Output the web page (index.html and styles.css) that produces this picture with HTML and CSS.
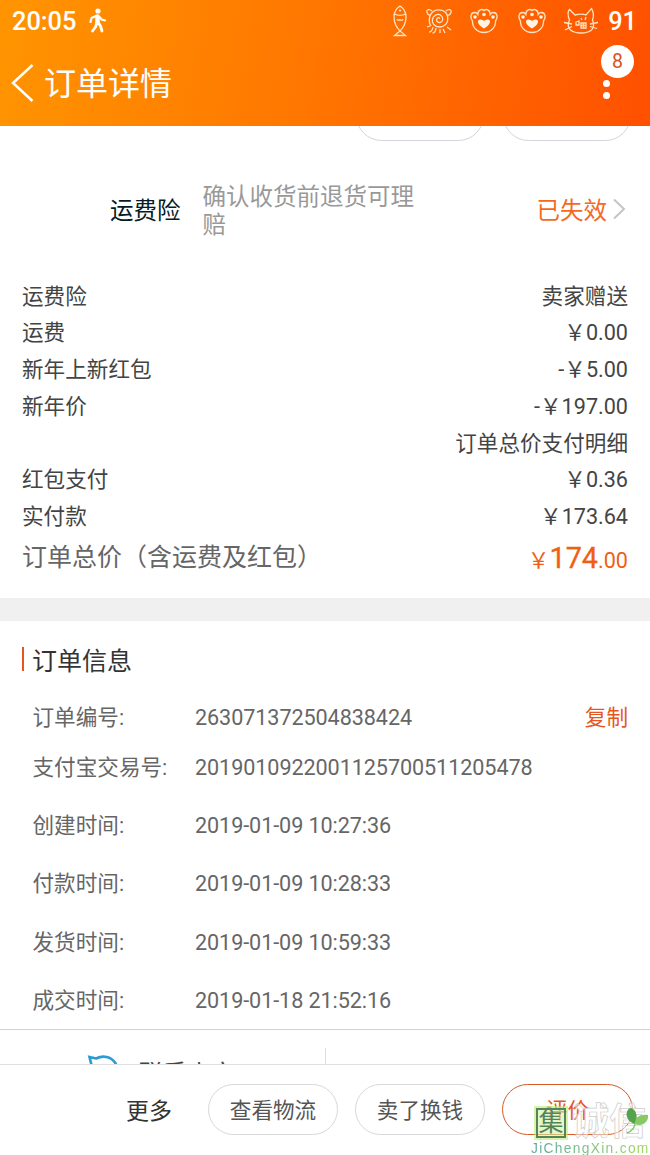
FILE: index.html
```
<!DOCTYPE html>
<html lang="zh-CN">
<head>
    <meta charset="UTF-8">
    <meta name="viewport" content="width=device-width, initial-scale=1.0">
    <title>订单详情</title>
    <link rel="stylesheet" href="styles.css">
</head>
<body>
    <header class="header">
        <div class="status-bar">
            <span class="clock">20:05</span>
            <svg class="walker" width="18" height="25" viewBox="0 0 18 25" fill="none" stroke="#fff" stroke-linecap="round" stroke-linejoin="round">
                <circle cx="9" cy="3" r="2.6" fill="#fff" stroke="none"/>
                <path d="M8.5 8.5v6" stroke-width="4.5"/>
                <path d="M7 8l-4.500 2-1 4M10.500 9l2 2.500 3.500 1" stroke-width="2.200"/>
                <path d="M8 15l-1.500 4-3 4M9.500 15l2 3 1.500 5" stroke-width="2.800"/>
            </svg>
            <div class="status-icons">
                <svg width="16" height="32" viewBox="0 0 16 32">
                    <path d="M8 1C3.500 4 2 7 2 12c0 6 2.500 10.500 6 14 3.500-3.500 6-8 6-14 0-5-1.500-8-6-11zM8 26l-5.500 4.500h11zM2.500 9c3 1.800 8 1.800 11 0M5 14c.3 1.800 2.700 1.800 3 .2.300 1.600 2.700 1.600 3-.2"/>
                    <circle class="solid" cx="8" cy="5.500" r="1"/>
                </svg>
                <svg width="28" height="28" viewBox="0 0 28 28">
                    <path d="M7 4C5 2 1 2 2 5.500c.4 1.500 1.500 2.500 3 3M21 4c2-2 6-2 5 1.500-.4 1.500-1.500 2.500-3 3"/>
                    <path d="M6 19C3 15 4 7 9 4c5-2.500 12-1 13.500 5 1.500 7-3 11-8 11-5 0-8-4-7-8s5.500-6 8.500-3.500c3 2.500 2 6.500-1 7-3 .5-4-2-3-4 1-1.500 3-1 2.500.5"/>
                    <path d="M5 19l-3 1M8 20c-.5 3-2 5-4 5M11 21c-.3 3-1.500 5-3.500 5M15 22v4M18 22l2 4M22 20l4 3"/>
                </svg>
                <svg width="28" height="26" viewBox="0 0 28 26">
                    <path d="M2.500 13C0 10 .5 4.500 4.500 4.500c1.500 0 2.500.5 3.300 1.800C8 1.500 12 .5 14 2.500c2-2 6-1 6.200 3.800C21 5 22 4.500 23.500 4.500c4 0 4.500 5.500 2 8.500.5 6-4.500 11.500-11.500 11.500S2 19 2.500 13z"/>
                    <circle class="solid" cx="5" cy="9" r="1.800"/><circle class="solid" cx="14" cy="6.500" r="1.800"/><circle class="solid" cx="23" cy="9" r="1.800"/>
                    <path class="solid" d="M14 20.500c-7-4-7.500-9-3.500-9 2 0 3.500 1.500 3.500 1.500s1.500-1.500 3.500-1.500c4 0 3.500 5-3.500 9z"/>
                </svg>
                <svg class="second-paw" width="28" height="26" viewBox="0 0 28 26">
                    <path d="M2.500 13C0 10 .5 4.500 4.500 4.500c1.500 0 2.500.5 3.300 1.800C8 1.500 12 .5 14 2.500c2-2 6-1 6.200 3.800C21 5 22 4.500 23.500 4.500c4 0 4.500 5.500 2 8.500.5 6-4.500 11.500-11.500 11.500S2 19 2.500 13z"/>
                    <circle class="solid" cx="5" cy="9" r="1.800"/><circle class="solid" cx="14" cy="6.500" r="1.800"/><circle class="solid" cx="23" cy="9" r="1.800"/>
                    <path class="solid" d="M14 20.500c-7-4-7.500-9-3.500-9 2 0 3.500 1.500 3.500 1.500s1.500-1.500 3.500-1.500c4 0 3.500 5-3.500 9z"/>
                </svg>
                <svg width="36" height="28" viewBox="0 0 36 28">
                    <path d="M6.500 13C4.500 8 5 4 6.500 2.500L12 8c4-1 8-1 11 0l5.500-6.500C30 4 31 9 29.500 13c2 5 1 8-1 10-5 4-16 4-21 0-2-2-3-6-1-10z"/>
                    <path d="M1 15.500l8 1.500M2 23l7-3.500M35 15.500l-8 1.500M34 21.500l-7-2M13 15l3-1v4h-3zM18 16h5v5h-5zM18 18.500h5M20.500 16v5M19 13l-1-2M22 13l1-3"/>
                </svg>
            </div>
            <span class="battery">91</span>
        </div>
        <div class="title-bar">
            <svg width="24" height="42" viewBox="0 0 24 42" fill="none" stroke="#fff" stroke-width="2.500"><path d="M21.500 3L2 21l19.500 18"/></svg>
            <h1>订单详情</h1>
            <div class="menu">
                <span class="dot"></span>
                <span class="dot"></span>
                <span class="badge">8</span>
            </div>
        </div>
    </header>

    <main>
        <div class="item-actions">
            <span class="item-button"></span>
            <span class="item-button"></span>
        </div>
        <section class="insurance">
            <span class="insurance-name">运费险</span>
            <p class="insurance-text">确认收货前退货可理赔</p>
            <span class="insurance-state">已失效</span>
            <svg width="14" height="22" viewBox="0 0 14 22" fill="none" stroke="#c4c4c4" stroke-width="2"><path d="M2 1.500l10 9.500L2 20.500"/></svg>
        </section>

        <section class="prices">
            <div class="price-row"><span>运费险</span><span>卖家赠送</span></div>
            <div class="price-row"><span>运费</span><span>￥0.00</span></div>
            <div class="price-row"><span>新年上新红包</span><span>-￥5.00</span></div>
            <div class="price-row"><span>新年价</span><span>-￥197.00</span></div>
            <div class="price-row"><span></span><span>订单总价支付明细</span></div>
            <div class="price-row"><span>红包支付</span><span>￥0.36</span></div>
            <div class="price-row"><span>实付款</span><span>￥173.64</span></div>
            <div class="price-row total"><span>订单总价（含运费及红包）</span><span class="total-price">￥<b>174</b>.00</span></div>
        </section>

        <section class="info">
            <h2>订单信息</h2>
            <div class="info-row first"><span class="label">订单编号:</span><span class="value">263071372504838424</span><a class="copy">复制</a></div>
            <div class="info-row"><span class="label">支付宝交易号:</span><span class="value">2019010922001125700511205478</span></div>
            <div class="info-row"><span class="label">创建时间:</span><span class="value">2019-01-09 10:27:36</span></div>
            <div class="info-row"><span class="label">付款时间:</span><span class="value">2019-01-09 10:28:33</span></div>
            <div class="info-row"><span class="label">发货时间:</span><span class="value">2019-01-09 10:59:33</span></div>
            <div class="info-row"><span class="label">成交时间:</span><span class="value">2019-01-18 21:52:16</span></div>
        </section>

        <div class="contact">
            <div class="contact-seller">
                <svg width="32" height="32" viewBox="0 0 32 32" fill="none" stroke="#2b9bd3" stroke-width="2.600"><path d="M5 13L2.500 3l6.500 1.500c7-3.500 15-2 19 4C33 17 28 29 16 29 7 29 2 22 5 13z"/></svg>
                <span>联系卖家</span>
            </div>
            <div class="contact-phone"></div>
        </div>
    </main>

    <footer class="footer">
        <span class="more">更多</span>
        <button class="pill">查看物流</button>
        <button class="pill">卖了换钱</button>
        <button class="pill rate">评价</button>
        <div class="watermark">
            <div class="mark-name">
                <span class="mark-box">集</span><span class="mark-text">诚信</span>
                <svg class="leaf" width="24" height="28" viewBox="0 0 24 28"><path d="M10 17C-1 14 0 2 6 1c6 2 7 10 4 16z" fill="#55a24c"/><path d="M10 17c0-7 5-10 13-9 1 7-6 12-13 9z" fill="#8ac866"/><path d="M10 16c0 4-3 8-8 10" fill="none" stroke="#8ac866" stroke-width="1.500"/></svg>
            </div>
            <div class="mark-url">JiChengXin.com</div>
        </div>
    </footer>
</body>
</html>
```
FILE: styles.css
```
* {
    box-sizing: border-box;
}
body {
    margin: 0;
    width: 650px;
    height: 1155px;
    overflow: hidden;
    background-color: #fff;
    color: #444;
    font-family: Roboto, "Noto Sans CJK SC", sans-serif;
    font-size: 21.6px;
}
svg {
    display: block;
    flex-shrink: 0;
}
h1, h2, p {
    margin: 0;
    font-weight: normal;
}
.header {
    height: 126px;
    background: linear-gradient(100deg, #ff9500 0%, #ff7600 48%, #ff5000 100%);
    color: #fff;
}
.status-bar {
    display: flex;
    align-items: center;
    height: 42px;
    padding: 0 13px 0 12px;
    font-size: 25.4px;
    font-weight: 500;
}
.walker {
    margin-left: 13px;
    margin-top: -2px;
}
.status-icons {
    display: flex;
    align-items: center;
    gap: 17px;
    margin-left: auto;
    margin-right: 9px;
}
.status-icons svg {
    fill: none;
    stroke: #ffe5c4;
    stroke-width: 1.3;
}
.status-icons .second-paw {
    margin-left: 3px;
}
.status-icons .solid {
    fill: #fff3e2;
    stroke: none;
}
.title-bar {
    display: flex;
    align-items: center;
    height: 82px;
    padding: 0 40px 0 11px;
}
.title-bar h1 {
    margin-left: 9px;
    padding-top: 2px;
    font-size: 32px;
    line-height: 42px;
}
.menu {
    position: relative;
    display: flex;
    flex-direction: column;
    gap: 5px;
    margin-left: auto;
    padding-top: 12px;
}
.dot {
    width: 7px;
    height: 7px;
    border-radius: 50%;
    background-color: #fff;
}
.badge {
    position: absolute;
    left: -2px;
    bottom: 21px;
    width: 33px;
    height: 33px;
    border-radius: 50%;
    background-color: #fff;
    color: #d65220;
    font-size: 19.5px;
    line-height: 34px;
    text-align: center;
}
.item-actions {
    display: flex;
    justify-content: flex-end;
    align-items: flex-end;
    gap: 19px;
    height: 15px;
    padding-right: 19px;
    overflow: hidden;
}
.item-button {
    width: 128px;
    height: 51px;
    border: 1px solid #d4d4da;
    border-radius: 26px;
}
.insurance {
    display: flex;
    align-items: center;
    height: 136px;
    padding: 0 24px 0 110px;
    font-size: 23.5px;
}
.insurance-name {
    color: #051b28;
}
.insurance-text {
    width: 220px;
    margin-left: 22px;
    padding-top: 3px;
    color: #999;
    line-height: 28px;
}
.insurance-state {
    margin-left: auto;
    margin-right: 5px;
    color: #f26a22;
}
.prices {
    height: 321px;
    padding: 1.5px 22px 0;
}
.price-row {
    display: flex;
    justify-content: space-between;
    line-height: 36.8px;
    height: 36.8px;
}
.total {
    height: 44px;
    line-height: 44px;
    font-size: 25px;
    color: #666;
}
.total-price {
    font-size: 21.6px;
    color: #ee5f14;
}
.total-price b {
    font-size: 28.8px;
    font-weight: 400;
    -webkit-text-stroke: 0.3px #ee5f14;
}
.info {
    height: 431px;
    padding-top: 16px;
    border-top: 23px solid #f0f0f0;
    color: #666;
}
.info h2 {
    display: flex;
    align-items: center;
    height: 44px;
    padding-left: 22px;
    color: #333;
    font-size: 25px;
}
.info h2::before {
    content: "";
    width: 2px;
    height: 24px;
    margin-right: 8px;
    background-color: #e5571c;
}
.info-row {
    display: flex;
    align-items: center;
    height: 58.4px;
    padding: 0 22px 0 32.5px;
}
.info-row.first {
    height: 42px;
    margin-top: 13px;
}
.label {
    width: 162.5px;
}
.value {
    padding-top: 4px;
    letter-spacing: -0.08px;
}
.copy {
    margin-left: auto;
    color: #e5571c;
}
.contact {
    display: flex;
    height: 35px;
    overflow: hidden;
    border-top: 1px solid #d2d2d2;
}
.contact-seller {
    display: flex;
    width: 325px;
    height: 66px;
    padding: 24px 0 0 87px;
    font-size: 24px;
}
.contact-seller span {
    margin-left: 20px;
    line-height: 41px;
}
.contact-phone {
    flex: 1;
    height: 30px;
    margin-top: 18px;
    border-left: 1px solid #ddd;
}
.footer {
    position: relative;
    display: flex;
    align-items: center;
    gap: 17px;
    height: 91px;
    padding: 0 17px 2px 126px;
    border-top: 1px solid #e0e0e0;
    background-color: #fff;
}
.more {
    margin-right: 19px;
    font-size: 23px;
    color: #333;
}
.pill {
    width: 130px;
    height: 51px;
    padding: 0 0 2px;
    border: 1px solid #d8d8d8;
    border-radius: 26px;
    background-color: #fff;
    color: #555;
    font: inherit;
}
.rate {
    width: 131px;
    border-color: #d65a28;
    color: #e5571c;
}
.watermark {
    position: absolute;
    left: 531px;
    top: 41px;
    width: 119px;
}
.mark-name {
    position: relative;
    display: flex;
    align-items: center;
    height: 34px;
    padding-left: 5px;
}
.mark-box {
    width: 30px;
    height: 30px;
    border: 2px solid #55845a;
    box-shadow: 0 0 0 2px rgba(190, 235, 120, 0.6);
    background-color: rgba(210, 242, 165, 0.6);
    color: #55845a;
    font-size: 25px;
    line-height: 25px;
    text-align: center;
}
.mark-text {
    margin-left: 6px;
    color: rgba(255, 255, 255, 0.5);
    font-size: 37px;
    font-weight: bold;
    line-height: 34px;
    -webkit-text-stroke: 0.7px #ccc;
}
.leaf {
    position: absolute;
    left: 94px;
    top: 1px;
}
.mark-url {
    padding-top: 1px;
    font-family: "Liberation Sans", sans-serif;
    font-size: 13.8px;
    letter-spacing: 1.3px;
    line-height: 15px;
    white-space: nowrap;
    background: linear-gradient(90deg, #59aaa0, #a2d65a);
    -webkit-background-clip: text;
    -webkit-text-fill-color: transparent;
}
```
